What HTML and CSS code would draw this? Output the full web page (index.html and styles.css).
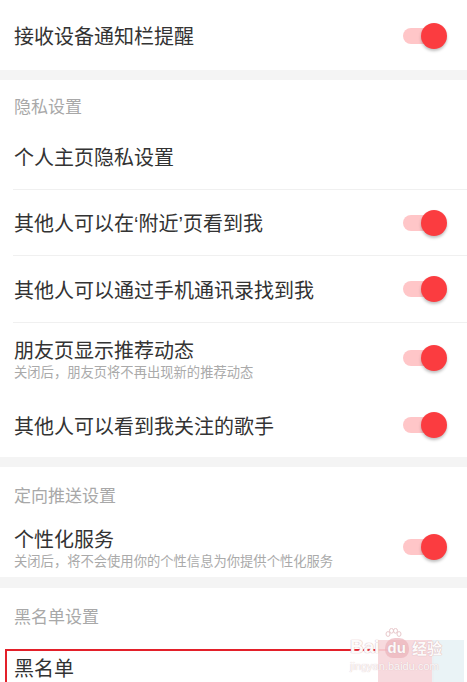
FILE: index.html
```html
<!DOCTYPE html>
<html lang="zh">
<head>
<meta charset="utf-8">
<link rel="stylesheet" href="styles.css">
</head>
<body>
<div class="page">
  <div class="row first">
    <div class="title">接收设备通知栏提醒</div>
    <div class="toggle"><span class="track"></span><span class="knob"></span></div>
  </div>
  <div class="band"></div>

  <div class="header h1">隐私设置</div>
  <div class="row div r-home"><div class="title">个人主页隐私设置</div></div>
  <div class="row div r-near">
    <div class="title">其他人可以在<span class="q">‘</span>附近<span class="q">’</span>页看到我</div>
    <div class="toggle"><span class="track"></span><span class="knob"></span></div>
  </div>
  <div class="row div r-contact">
    <div class="title">其他人可以通过手机通讯录找到我</div>
    <div class="toggle"><span class="track"></span><span class="knob"></span></div>
  </div>
  <div class="row r-friend">
    <div class="texts">
      <div class="title">朋友页显示推荐动态</div>
      <div class="sub">关闭后，朋友页将不再出现新的推荐动态</div>
    </div>
    <div class="toggle"><span class="track"></span><span class="knob"></span></div>
  </div>
  <div class="row r-singer">
    <div class="title">其他人可以看到我关注的歌手</div>
    <div class="toggle"><span class="track"></span><span class="knob"></span></div>
  </div>
  <div class="band"></div>

  <div class="header h2">定向推送设置</div>
  <div class="row r-service">
    <div class="texts">
      <div class="title">个性化服务</div>
      <div class="sub">关闭后，将不会使用你的个性信息为你提供个性化服务</div>
    </div>
    <div class="toggle"><span class="track"></span><span class="knob"></span></div>
  </div>
  <div class="band b3"></div>

  <div class="header h3">黑名单设置</div>
  <div class="row r-black">
    <div class="title">黑名单</div>
    <div class="highlight"></div>
  </div>

  <div class="watermark">
    <div class="wm-pink"></div>
    <div class="wm-blue"></div>
    <div class="wm-logo">
      <span class="wm-bai">Bai</span>
      <svg class="wm-paw" width="18" height="14" viewBox="0 0 18 14">
        <ellipse cx="4" cy="6" rx="2" ry="2.4" fill="none" stroke="#e8c8cb" stroke-width="1"/>
        <ellipse cx="7.5" cy="2.8" rx="2" ry="2.4" fill="none" stroke="#e8c8cb" stroke-width="1"/>
        <ellipse cx="11.5" cy="2.8" rx="2" ry="2.4" fill="none" stroke="#e8c8cb" stroke-width="1"/>
        <ellipse cx="15" cy="6" rx="2" ry="2.4" fill="none" stroke="#e8c8cb" stroke-width="1"/>
      </svg>
      <span class="wm-du">du</span>
      <span class="wm-jy">经验</span>
    </div>
    <div class="wm-url">jingyan.baidu.com</div>
  </div>
</div>
</body>
</html>
```

FILE: styles.css
```css
* { box-sizing: border-box; margin: 0; padding: 0; }
html, body { background: #ffffff; }
body {
  font-family: "Noto Sans CJK SC", "Noto Sans", sans-serif;
  color: #333333;
  width: 467px;
  height: 682px;
  overflow: hidden;
}
.page { position: relative; width: 467px; height: 682px; overflow: hidden; }

.row {
  display: flex;
  align-items: center;
  justify-content: space-between;
  margin-left: 13px;
  padding-left: 1px;
  padding-right: 20px;
}
.row.div { border-bottom: 1px solid #f0f0f0; }

.title { font-size: 20px; line-height: 26px; color: #333; }
.q { font-family: "Liberation Sans", sans-serif; }
.sub { font-size: 13.3px; line-height: 18px; color: #aaa; }
.texts { display: flex; flex-direction: column; }

.first { height: 70px; padding-top: 2px; }
.band { height: 10px; background: #f4f4f4; }
.band.b3 { height: 11px; }

.header {
  font-size: 17px;
  line-height: 22px;
  color: #a8a8a8;
  padding-left: 14px;
}
.h1 { height: 46px; padding-top: 15px; }
.h2 { height: 48px; padding-top: 17px; }
.h3 { height: 50px; padding-top: 17px; }

.r-home { height: 64px; padding-bottom: 2px; }
.r-near { height: 66px; padding-top: 2px; }
.r-contact { height: 67px; padding-top: 2px; }
.r-friend { height: 67px; padding-top: 5px; }
.r-singer { height: 67px; padding-top: 5px; }
.r-service { height: 62px; padding-top: 4px; }
.r-black { height: 60px; position: relative; }

.toggle {
  position: relative;
  width: 44px;
  height: 26px;
  flex: none;
}
.r-near .toggle, .r-contact .toggle, .r-singer .toggle { margin-top: -2px; }
.r-friend .toggle, .r-service .toggle { margin-top: -2px; }
.track {
  position: absolute;
  left: 0;
  top: 5px;
  width: 38px;
  height: 16px;
  border-radius: 8px;
  background: #ffc6c8;
}
.knob {
  position: absolute;
  right: 0;
  top: 0;
  width: 26px;
  height: 26px;
  border-radius: 50%;
  background: #fb3c40;
  box-shadow: 0 2px 3px rgba(0, 0, 0, 0.25);
}

.highlight {
  position: absolute;
  left: -8px;
  top: 11px;
  width: 400px;
  height: 44px;
  border: 2px solid #e3202a;
  border-right: none;
  pointer-events: none;
}

.watermark {
  position: absolute;
  left: 340px;
  top: 622px;
  width: 127px;
  height: 60px;
}
.wm-pink {
  position: absolute;
  left: 38px;
  top: 18px;
  width: 56px;
  height: 42px;
  background: rgba(246, 214, 218, 0.9);
}
.wm-blue {
  position: absolute;
  left: 92px;
  top: 18px;
  width: 32px;
  height: 42px;
  background: rgba(232, 242, 245, 0.9);
}
.wm-logo {
  position: absolute;
  left: 10px;
  top: 14px;
  display: flex;
  align-items: flex-end;
  font-family: "Liberation Sans", "Noto Sans CJK SC", sans-serif;
  font-weight: bold;
  color: rgba(255, 255, 255, 0.95);
  text-shadow: 0 0 1px #d9b4b8, 0 0 1px #d9b4b8;
}
.wm-bai { font-size: 19px; line-height: 22px; }
.wm-paw { position: absolute; left: 34px; top: -8px; }
.wm-du {
  font-size: 15px;
  line-height: 20px;
  margin-left: 5px;
  padding: 0 3px;
  border-radius: 10px 10px 8px 8px;
  background: rgba(235, 180, 186, 0.7);
}
.wm-jy { font-size: 15px; line-height: 20px; margin-left: 3px; font-family: "Noto Sans CJK SC", sans-serif; }
.wm-url {
  position: absolute;
  left: 10px;
  top: 38px;
  font-family: "Liberation Sans", sans-serif;
  font-size: 11px;
  color: rgba(255, 255, 255, 0.9);
  text-shadow: 0 0 1px #d2b0b4;
}
```
